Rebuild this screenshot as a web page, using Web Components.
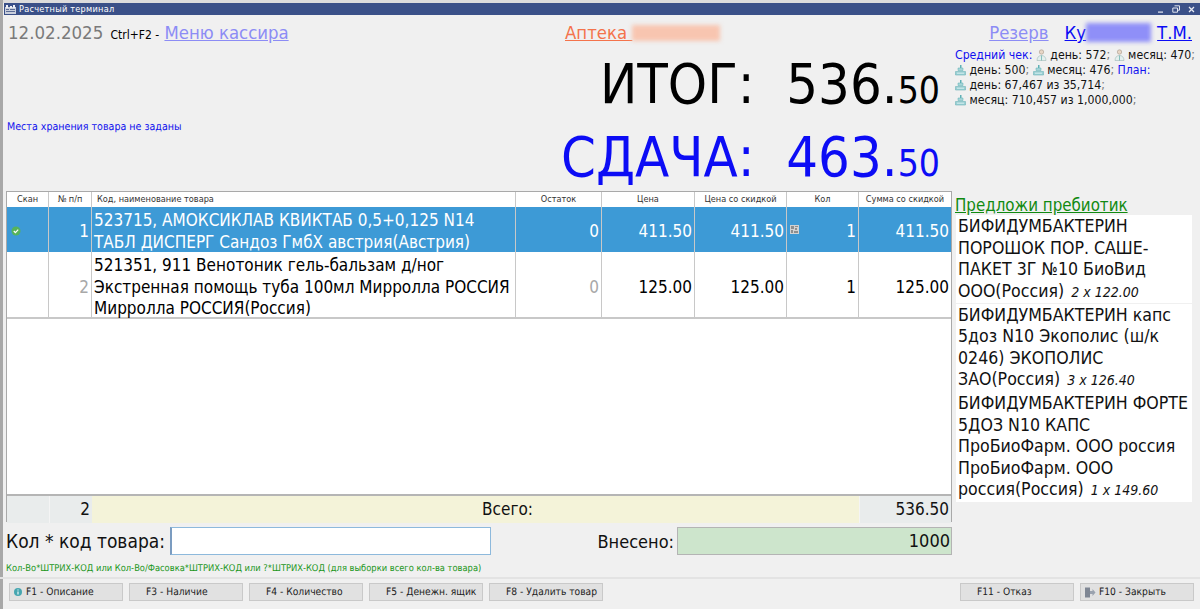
<!DOCTYPE html>
<html lang="ru">
<head>
<meta charset="utf-8">
<title>Расчетный терминал</title>
<style>
    html, body { margin: 0; padding: 0; height: 100%; background: #f0f0f0; overflow: hidden; }
    body { font-family: "DejaVu Sans", "Liberation Sans", sans-serif; font-stretch: condensed; }
</style>
</head>
<body>
<term-app></term-app>

<script>
const FONT = `font-family: "DejaVu Sans", "Liberation Sans", sans-serif; font-stretch: condensed;`;

const ICONS = {
    doctor: `<svg width="11" height="12" viewBox="0 0 11 12"><circle cx="5.500" cy="3" r="2.200" fill="#e8d6c6" stroke="#a89a8c" stroke-width=".6"/><path d="M1 11.500c0-3.400 2-5 4.500-5s4.500 1.600 4.500 5z" fill="#e4efee" stroke="#9db8b6" stroke-width=".6"/><path d="M5.500 6.500v5" stroke="#6fb3ae" stroke-width=".8"/></svg>`,
    register: `<svg width="11" height="12" viewBox="0 0 11 12"><path d="M5 1h1.500v3H5z" fill="#5fb0b5"/><path d="M3 4h5v2.500H3z" fill="#a6d5d8" stroke="#5fb0b5" stroke-width=".5"/><path d="M.5 7.500h10v3.500H.5z" fill="#9ad0d4" stroke="#6fb3b8" stroke-width=".6"/><path d="M2 9.200h7" stroke="#e6f4f5" stroke-width=".8"/></svg>`
};

class TitleBar extends HTMLElement {
    connectedCallback() {
        this.attachShadow({ mode: 'open' });
        this.shadowRoot.innerHTML = `
            <style>
                :host { display: flex; align-items: center; height: 12px; margin: 3px 0 1px 4px; background: #3a5088; color: #fff; font-size: 9.100px; font-weight: 400; }
                svg { display: block; }
                .ico { margin-left: 1px; margin-right: 3px; }
                .name { flex: 1; letter-spacing: .25px; }
                .ctl { display: flex; gap: 8px; margin-right: 5px; align-items: center; }
            </style>
            <svg class="ico" width="11" height="9" viewBox="0 0 11 9"><path d="M0 2h11v7H0z" fill="#c9cfdc"/><path d="M1 0h2v3H1zM5 1h2v2H5zM8 0h2v3H8z" fill="#eef0f5"/><path d="M1 4h3v1H1zM5 4h5v1H5zM1 6h9v1H1z" fill="#5b6c96"/></svg>
            <span class="name"><slot></slot></span>
            <span class="ctl">
                <svg width="7" height="7" viewBox="0 0 7 7"><path d="M1 5.500h5v1.200H1z" fill="#e6e9f2"/></svg>
                <svg width="8" height="8" viewBox="0 0 8 8"><path d="M2.500.8h5v4.400h-1.500M.8 3h4.700v4.200H.8z" fill="none" stroke="#dfe3ee" stroke-width="1"/></svg>
                <svg width="7" height="7" viewBox="0 0 7 7"><path d="M1 1l5 5M6 1L1 6" stroke="#e6e9f2" stroke-width="1.300"/></svg>
            </span>`;
    }
}

class TotalLine extends HTMLElement {
    connectedCallback() {
        this.attachShadow({ mode: 'open' });
        this.shadowRoot.innerHTML = `
            <style>
                :host { display: flex; justify-content: flex-end; align-items: baseline; ${FONT} font-size: 55.600px; line-height: 66px; white-space: pre; }
                .cents { font-size: 37px; }
            </style>
            <span>${this.getAttribute('label')}:  ${this.getAttribute('whole')}.</span><span class="cents">${this.getAttribute('cents')}</span>`;
    }
}

class SalesStats extends HTMLElement {
    connectedCallback() {
        this.attachShadow({ mode: 'open' });
        this.shadowRoot.innerHTML = `
            <style>
                :host { display: block; font-size: 12.200px; line-height: 15px; color: #111; white-space: nowrap; }
                b { font-weight: 400; color: #1010f0; }
                i { color: #777; font-style: normal; }
                svg { vertical-align: -2px; }
            </style>
            <div><b>Средний чек:</b> ${ICONS.doctor} день: 572<i>;</i> ${ICONS.doctor} месяц: 470<i>;</i></div>
            <div>${ICONS.register} день: 500<i>;</i> ${ICONS.register} месяц: 476<i>;</i> <b>План:</b></div>
            <div>${ICONS.register} день: 67,467 из 35,714<i>;</i></div>
            <div>${ICONS.register} месяц: 710,457 из 1,000,000<i>;</i></div>`;
    }
}

class TopHeader extends HTMLElement {
    connectedCallback() {
        this.attachShadow({ mode: 'open' });
        this.shadowRoot.innerHTML = `
            <style>
                :host { display: block; height: 175px; font-size: 18.400px; }
                .top { display: grid; grid-template-columns: 557px 1fr auto; align-items: baseline; height: 30px; padding: 6px 8px 0 8px; box-sizing: border-box; }
                .date { color: #7a7a7a; font-size: 18.500px; }
                .keys { color: #000; font-size: 12px; margin: 0 0 0 2px; }
                a { color: #8c8cf5; text-decoration: underline; }
                .shop { color: #f4734b; text-decoration: underline; }
                .smear { display: inline-block; width: 88px; height: 16px; background: #f8c5b0; filter: blur(2px); vertical-align: -2px; }
                .smear.blue { width: 65px; height: 19px; background: #8f8ff8; vertical-align: -3px; margin: 0 6px 0 0; }
                .person { display: flex; gap: 16px; }
                .name { color: #0b0bf5; }
                .low { display: grid; grid-template-columns: 1fr 384px 260px; }
                .store { color: #1212ee; font-size: 10.600px; text-rendering: geometricPrecision; padding: 75px 0 0 7px; }
                .sums { margin-top: -1px; padding-top: 6px; }
                .stats { padding: 2px 0 0 15px; }
                .black { color: #000; }
                .blue { color: #0c0cf5; }
            </style>
            <div class="top">
                <div><span class="date">12.02.2025</span> <span class="keys">Ctrl+F2 -</span> <a>Меню кассира</a></div>
                <div><span class="shop">Аптека </span><span class="smear"></span></div>
                <div class="person"><a>Резерв</a><a class="name">Ку<span class="smear blue"></span>Т.М.</a></div>
            </div>
            <div class="low">
                <div class="store">Места хранения товара не заданы</div>
                <div class="sums">
                    <total-line class="black" label="ИТОГ" whole="536" cents="50"></total-line>
                    <total-line class="blue" label="СДАЧА" whole="463" cents="50"></total-line>
                </div>
                <sales-stats class="stats"></sales-stats>
            </div>`;
    }
}

class GridRow extends HTMLElement {
    connectedCallback() {
        this.attachShadow({ mode: 'open' });
        this.shadowRoot.innerHTML = `
            <style>
                :host { display: grid; grid-template-columns: 42px 43px 424px 86px 93px 92px 72px 1fr; grid-template-rows: minmax(0, 1fr); background: #fff; color: #000; font-size: 17px; line-height: 21.500px; }
                :host([kind=head]) { height: 15px; font-size: 9.100px; line-height: 15px; color: #333; }
                :host([kind=active]) { height: 45px; background: #3d9ad6; color: #fff; line-height: 22.500px; --pt: 3px; }
                :host([kind=plain]) { height: 67px; box-sizing: border-box; border-bottom: 2px solid #c8c8c8; --pt: 6px; }
            </style>
            <slot></slot>`;
    }
}

class GridCell extends HTMLElement {
    connectedCallback() {
        this.attachShadow({ mode: 'open' });
        this.shadowRoot.innerHTML = `
            <style>
                :host { display: flex; align-items: center; box-sizing: border-box; border-right: 1px solid #c8c8c8; padding: var(--pt, 0) 2px 0; min-width: 0; min-height: 0; white-space: pre-line; }
                :host([a=r]) { justify-content: flex-end; }
                :host([a=c]) { justify-content: center; }
                :host([a=h]) { padding-left: 5px; }
                :host([gray]) { color: #a8a8a8; }
                :host(:last-child) { border-right: 0; }
                :host([spread]) { justify-content: space-between; }
            </style>
            <slot></slot>`;
    }
}

class GoodsTable extends HTMLElement {
    connectedCallback() {
        this.attachShadow({ mode: 'open' });
        this.shadowRoot.innerHTML = `
            <style>
                :host { display: flex; flex-direction: column; width: 946px; height: 331px; box-sizing: border-box; background: #fff; border: 1px solid #a9a9a9; border-bottom-width: 2px; }
                .fill { flex: 1; border-bottom: 2px solid #b5b5b5; }
                .foot { display: grid; grid-template-columns: 42px 43px 1fr 92px; height: 24px; font-size: 17px; line-height: 27px; color: #111; }
                .foot div { padding: 0 2px 0 3px; }
                .g { background: #e9ecec; }
                .y { background: #f4f3d9; text-align: center; padding-left: 66px !important; }
                .n { text-align: right; border-left: 1px solid #f4f4f4; }
            </style>
            <slot></slot>
            <div class="fill"></div>
            <div class="foot">
                <div class="g"></div>
                <div class="g n">2</div>
                <div class="y">Всего:</div>
                <div class="g n">536.50</div>
            </div>`;
    }
}

class OfferCard extends HTMLElement {
    connectedCallback() {
        this.attachShadow({ mode: 'open' });
        this.shadowRoot.innerHTML = `
            <style>
                :host { display: block; background: #fff; padding: 1px 0 0 2px; margin-bottom: .5px; font-size: 17.600px; line-height: 21.500px; color: #111; white-space: nowrap; }
                em { font-size: 14px; margin-left: 2px; }
            </style>
            <slot></slot> <em>${this.getAttribute('qty')}</em>`;
    }
}

class OfferPanel extends HTMLElement {
    connectedCallback() {
        this.attachShadow({ mode: 'open' });
        this.shadowRoot.innerHTML = `
            <style>
                :host { display: block; width: 236px; margin-left: 4px; }
                a { display: block; height: 24px; line-height: 28px; margin-left: -1px; font-size: 16.800px; color: #118a11; text-decoration: underline; white-space: nowrap; }
            </style>
            <a>Предложи пребиотик</a>
            <slot></slot>`;
    }
}

class EntryRow extends HTMLElement {
    connectedCallback() {
        this.attachShadow({ mode: 'open' });
        this.shadowRoot.innerHTML = `
            <style>
                :host { display: flex; align-items: center; height: 30px; margin-top: 4px; font-size: 18px; color: #111; white-space: nowrap; }
                .lab { width: 164px; padding-left: 6px; font-size: 19px; }
                input { width: 321px; height: 28px; box-sizing: border-box; border: 1px solid #8db9dc; background: #fff; padding: 0 0 0 1px; margin: 0; outline: 0; border-left: 2px solid #7b9cc0; }
                .paid { width: 183px; text-align: right; padding-right: 3px; }
                .sum { width: 275px; height: 28px; line-height: 26px; box-sizing: border-box; border: 1px solid #b4b4b4; background: #cde5cc; text-align: right; padding-right: 1px; }
            </style>
            <span class="lab">Кол * код товара:</span>
            <input type="text" aria-label="Кол * код товара">
            <span class="paid">Внесено:</span>
            <span class="sum">1000</span>`;
    }
}

class FuncButton extends HTMLElement {
    connectedCallback() {
        this.attachShadow({ mode: 'open' });
        this.shadowRoot.innerHTML = `
            <style>
                :host { display: flex; align-items: center; box-sizing: border-box; width: 114px; height: 18px; padding-left: 16px; background: #e1e1e1; border: 1px solid #c9c9c9; font-size: 10.200px; text-rendering: geometricPrecision; color: #222; white-space: nowrap; position: relative; }
                ::slotted(svg) { position: absolute; left: 3px; top: 3px; }
            </style>
            <slot name="icon"></slot><slot></slot>`;
    }
}

class FuncBar extends HTMLElement {
    connectedCallback() {
        this.attachShadow({ mode: 'open' });
        this.shadowRoot.innerHTML = `
            <style>
                :host { display: flex; gap: 6px; height: 32px; padding: 4px 6px 0 9px; box-sizing: border-box; border-top: 2px solid #e3e3e3; }
                .gap { flex: 1; }
            </style>
            <slot name="left"></slot><div class="gap"></div><slot name="right"></slot>`;
    }
}

class TermApp extends HTMLElement {
    connectedCallback() {
        this.attachShadow({ mode: 'open' });
        this.shadowRoot.innerHTML = `
            <style>
                :host { display: block; width: 1200px; height: 609px; box-sizing: border-box; background: #f0f0f0; box-shadow: inset 3px 0 #a8a8a8, inset 0 3px #dcdcdc; overflow: hidden; ${FONT} }
                .mid { display: flex; padding-left: 6px; height: 331px; }
                .hint { height: 16px; line-height: 16px; padding: 5px 0 0 6px; font-size: 9.270px; text-rendering: geometricPrecision; color: #1a961a; }
            </style>
            <title-bar>Расчетный терминал</title-bar>
            <top-header></top-header>
            <div class="mid">
                <goods-table>
                    <grid-row kind="head">
                        <grid-cell a="c">Скан</grid-cell><grid-cell a="c">№ п/п</grid-cell><grid-cell a="h">Код, наименование товара</grid-cell><grid-cell a="c">Остаток</grid-cell><grid-cell a="c">Цена</grid-cell><grid-cell a="c">Цена со скидкой</grid-cell><grid-cell a="c">Кол</grid-cell><grid-cell a="c">Сумма со скидкой</grid-cell>
                    </grid-row>
                    <grid-row kind="active">
                        <grid-cell><svg width="10" height="10" viewBox="0 0 10 10" style="margin-left:2px"><circle cx="5" cy="5" r="4.500" fill="#56b35a"/><path d="M2.800 5l1.600 1.600 2.800-3" fill="none" stroke="#fff" stroke-width="1.200"/></svg></grid-cell>
                        <grid-cell a="r">1</grid-cell>
                        <grid-cell>523715, АМОКСИКЛАВ КВИКТАБ 0,5+0,125 N14
ТАБЛ ДИСПЕРГ Сандоз ГмбХ австрия(Австрия)</grid-cell>
                        <grid-cell a="r">0</grid-cell><grid-cell a="r">411.50</grid-cell><grid-cell a="r">411.50</grid-cell>
                        <grid-cell spread><svg width="9" height="9" viewBox="0 0 9 9" style="margin:-3px 0 0 1px"><path d="M0 0h9v9H0z" fill="#d2d2d2"/><path d="M1 1h3v3H1zM5 1h3v1H5zM5 3h2v2H5zM1 5h2v3H1zM4 6h4v2H4z" fill="#8e8e8e"/></svg><span>1</span></grid-cell>
                        <grid-cell a="r">411.50</grid-cell>
                    </grid-row>
                    <grid-row kind="plain">
                        <grid-cell></grid-cell>
                        <grid-cell a="r" gray>2</grid-cell>
                        <grid-cell>521351, 911 Венотоник гель-бальзам д/ног
Экстренная помощь туба 100мл Мирролла РОССИЯ
Мирролла РОССИЯ(Россия)</grid-cell>
                        <grid-cell a="r" gray>0</grid-cell><grid-cell a="r">125.00</grid-cell><grid-cell a="r">125.00</grid-cell><grid-cell a="r">1</grid-cell><grid-cell a="r">125.00</grid-cell>
                    </grid-row>
                </goods-table>
                <offer-panel>
                    <offer-card qty="2 x 122.00">БИФИДУМБАКТЕРИН<br>ПОРОШОК ПОР. САШЕ-<br>ПАКЕТ 3Г №10 БиоВид<br>ООО(Россия)</offer-card>
                    <offer-card qty="3 x 126.40">БИФИДУМБАКТЕРИН капс<br>5доз N10 Экополис (ш/к<br>0246) ЭКОПОЛИС<br>ЗАО(Россия)</offer-card>
                    <offer-card qty="1 x 149.60">БИФИДУМБАКТЕРИН ФОРТЕ<br>5ДОЗ N10 КАПС<br>ПроБиоФарм. ООО россия<br>ПроБиоФарм. ООО<br>россия(Россия)</offer-card>
                </offer-panel>
            </div>
            <entry-row></entry-row>
            <div class="hint">Кол-Во*ШТРИХ-КОД или Кол-Во/Фасовка*ШТРИХ-КОД или ?*ШТРИХ-КОД (для выборки всего кол-ва товара)</div>
            <func-bar>
                <func-button slot="left"><svg slot="icon" width="10" height="10" viewBox="0 0 10 10"><circle cx="5" cy="5" r="4" fill="#46a6b0"/><path d="M5 2.500v1M5 4.500v3" stroke="#fff" stroke-width="1.100"/></svg>F1 - Описание</func-button>
                <func-button slot="left">F3 - Наличие</func-button>
                <func-button slot="left">F4 - Количество</func-button>
                <func-button slot="left">F5 - Денежн. ящик</func-button>
                <func-button slot="left">F8 - Удалить товар</func-button>
                <func-button slot="right">F11 - Отказ</func-button>
                <func-button slot="right" style="padding-left:18px"><svg slot="icon" width="12" height="11" viewBox="0 0 12 11"><path d="M1 .5h5v10H1z" fill="#7f8794"/><path d="M6 4h2.500V2L11.500 5.500 8.500 9V7H6z" fill="#9aa2ae"/></svg>F10 - Закрыть</func-button>
            </func-bar>`;
    }
}

customElements.define('title-bar', TitleBar);
customElements.define('total-line', TotalLine);
customElements.define('sales-stats', SalesStats);
customElements.define('top-header', TopHeader);
customElements.define('grid-row', GridRow);
customElements.define('grid-cell', GridCell);
customElements.define('goods-table', GoodsTable);
customElements.define('offer-card', OfferCard);
customElements.define('offer-panel', OfferPanel);
customElements.define('entry-row', EntryRow);
customElements.define('func-button', FuncButton);
customElements.define('func-bar', FuncBar);
customElements.define('term-app', TermApp);
</script>
</body>
</html>
